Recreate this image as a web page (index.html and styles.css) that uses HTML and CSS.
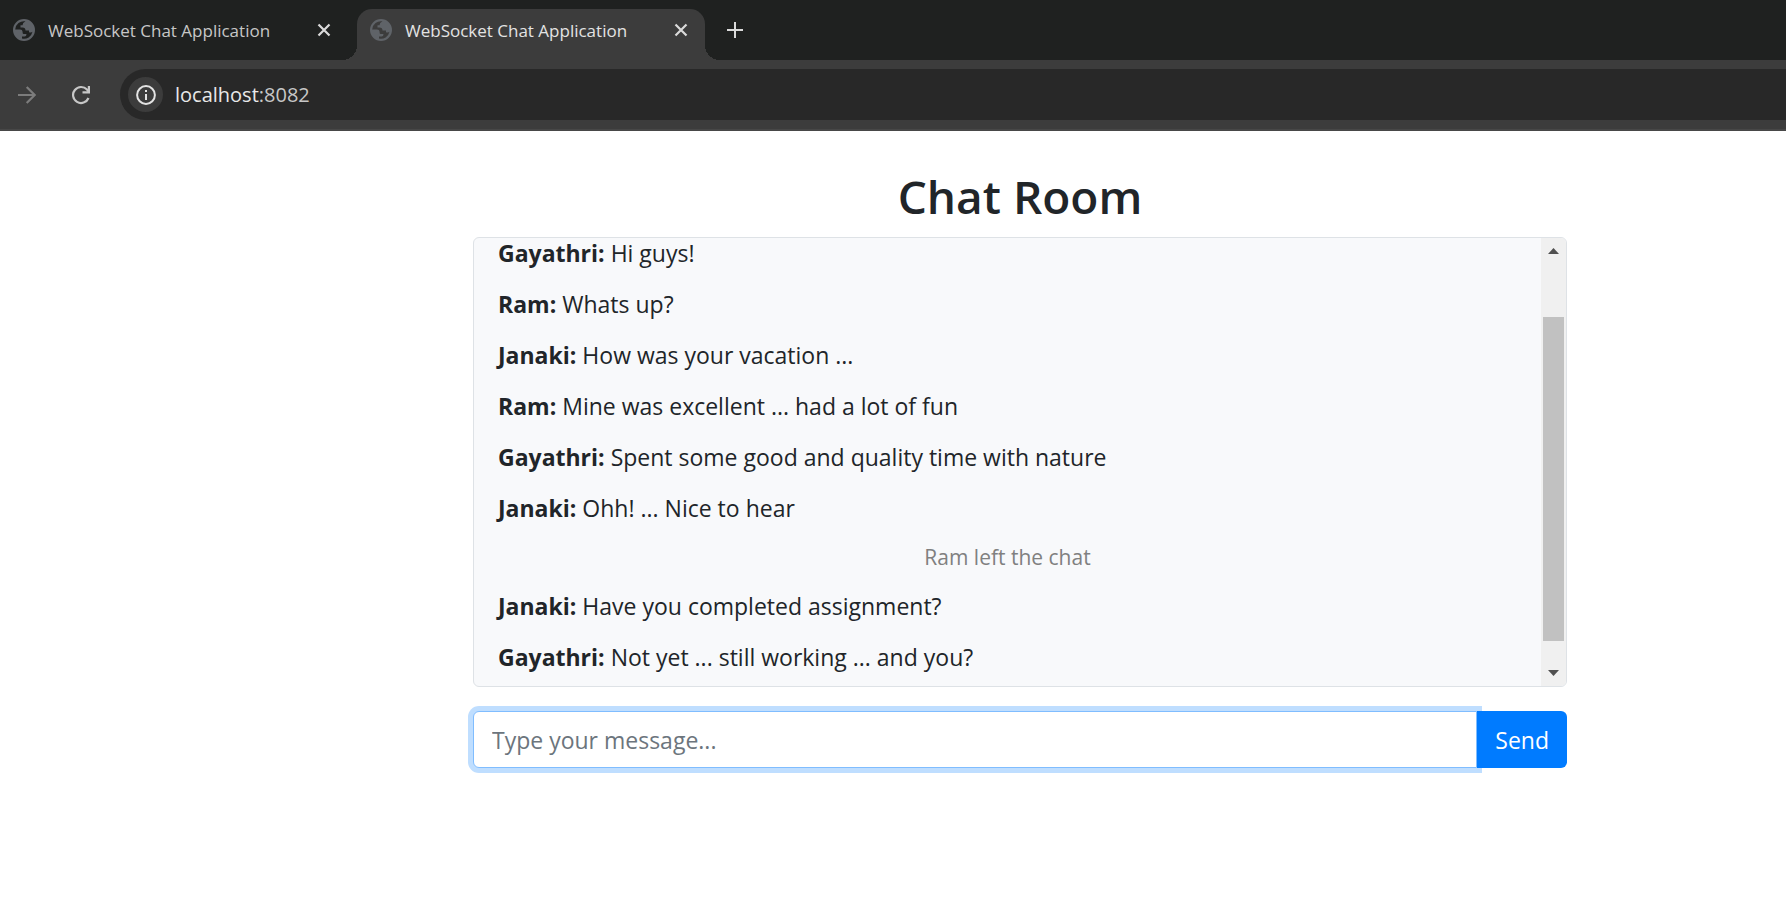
FILE: index.html
```html
<!DOCTYPE html>
<html lang="en">
<head>
<meta charset="utf-8">
<title>WebSocket Chat Application</title>
<link rel="stylesheet" href="styles.css">
</head>
<body>
<svg class="defs" aria-hidden="true">
  <symbol id="globe" viewBox="0 0 22 22">
    <path fill="#5f6368" fill-rule="evenodd" d="M11 0A11 11 0 1 1 11 22A11 11 0 1 1 11 0Z M2.200 10.500A8.800 8.800 0 0 1 12.500 2.300Q9.500 4 9.500 6.200H7.500V8.500H9.500Q12.500 8.500 12.500 11.500H16V13.200Q18 14.200 19.500 12.800A8.800 8.800 0 0 1 9 19.600V17.500H11.500Q13.500 17.500 13.500 15H10.500Q9.500 15 9.500 12.500Q9.500 10.500 7 10.500Z"/>
  </symbol>
  <symbol id="close" viewBox="0 0 14 14">
    <path d="M1.500 1.500 12.500 12.500 M12.500 1.500 1.500 12.500" fill="none" stroke="currentColor" stroke-width="2.200"/>
  </symbol>
</svg>
<header>
  <nav class="tabs" aria-label="Tabs">
    <div class="tab">
      <svg class="globe"><use href="#globe"/></svg>
      <span class="tab-title">WebSocket Chat Application</span>
      <button class="icon-button" aria-label="Close tab"><svg class="close"><use href="#close"/></svg></button>
    </div>
    <div class="tab active">
      <svg class="globe"><use href="#globe"/></svg>
      <span class="tab-title">WebSocket Chat Application</span>
      <button class="icon-button" aria-label="Close tab"><svg class="close"><use href="#close"/></svg></button>
    </div>
    <button class="icon-button new-tab" aria-label="New tab"><svg width="16" height="16" viewBox="0 0 16 16"><path d="M8 0V16M0 8H16" stroke="currentColor" stroke-width="2"/></svg></button>
  </nav>
  <div class="toolbar">
    <button class="icon-button forward" aria-label="Forward"><svg width="18" height="18" viewBox="0 0 18 18"><path d="M0 9H16.500M8.700 1 16.700 9 8.700 17" fill="none" stroke="currentColor" stroke-width="2.200"/></svg></button>
    <button class="icon-button reload" aria-label="Reload"><svg width="18" height="20" viewBox="0 0 18 20"><path d="M16.500 13A8 8 0 1 1 15 4.600L17 7" fill="none" stroke="currentColor" stroke-width="2.200"/><path d="M18 1V8.500H10.500V6.300H15.800V1Z" fill="currentColor"/></svg></button>
    <div class="address">
      <button class="icon-button info" aria-label="Site information"><svg width="20" height="20" viewBox="0 0 20 20"><circle cx="10" cy="10" r="8.900" fill="none" stroke="currentColor" stroke-width="2"/><path d="M9 9h2v6H9zM9 5h2v2H9z" fill="currentColor"/></svg></button>
      <span class="url">localhost<span class="port">:8082</span></span>
    </div>
  </div>
</header>
<main class="page">
  <h1 class="title">Chat Room</h1>
  <section class="chat" aria-label="Messages">
    <div class="messages">
      <p class="message"><strong>Gayathri:</strong> Hi guys!</p>
      <p class="message"><strong>Ram:</strong> Whats up?</p>
      <p class="message"><strong>Janaki:</strong> How was your vacation ...</p>
      <p class="message"><strong>Ram:</strong> Mine was excellent ... had a lot of fun</p>
      <p class="message"><strong>Gayathri:</strong> Spent some good and quality time with nature</p>
      <p class="message"><strong>Janaki:</strong> Ohh! ... Nice to hear</p>
      <p class="message notice">Ram left the chat</p>
      <p class="message"><strong>Janaki:</strong> Have you completed assignment?</p>
      <p class="message"><strong>Gayathri:</strong> Not yet ... still working ... and you?</p>
    </div>
    <div class="scrollbar" aria-hidden="true">
      <svg width="11" height="6" viewBox="0 0 11 6"><path d="M0 6 5.500 0 11 6Z" fill="#505050"/></svg>
      <div class="track"><div class="thumb"></div></div>
      <svg width="11" height="6" viewBox="0 0 11 6"><path d="M0 0 5.500 6 11 0Z" fill="#505050"/></svg>
    </div>
  </section>
  <form class="composer">
    <input class="field" type="text" placeholder="Type your message..." aria-label="Message">
    <button class="send" type="button">Send</button>
  </form>
</main>
</body>
</html>
```
FILE: styles.css
```css
* { box-sizing: border-box; }
body {
  margin: 0;
  background: #fff;
  color: #212529;
  font-family: "Segoe UI", "Open Sans", "Noto Sans", sans-serif;
  font-size: 23px;
  line-height: 36px;
}
.defs { display: none; }
.icon-button {
  display: flex;
  align-items: center;
  justify-content: center;
  padding: 0;
  border: 0;
  background: none;
  color: #dadada;
}
.tabs {
  display: flex;
  height: 60px;
  padding-top: 9px;
  background: #1f2120;
}
.tab {
  display: flex;
  align-items: center;
  width: 357px;
  padding: 0 26px 9px 13px;
  color: #c7c7c7;
  font-size: 17px;
  line-height: 24px;
}
.tab.active {
  position: relative;
  width: 348px;
  padding-right: 17px;
  border-radius: 15px 15px 0 0;
  background: #3c3c3c;
  color: #e3e3e3;
}
.tab.active::before,
.tab.active::after {
  content: "";
  position: absolute;
  bottom: 0;
  width: 15px;
  height: 15px;
}
.tab.active::before {
  right: 100%;
  background: radial-gradient(circle at 0 0, transparent 15px, #3c3c3c 15px);
}
.tab.active::after {
  left: 100%;
  background: radial-gradient(circle at 100% 0, transparent 15px, #3c3c3c 15px);
}
.globe { width: 22px; height: 22px; margin-right: 13px; }
.close { width: 14px; height: 14px; }
.tab-title { flex: 1; padding-top: 2px; white-space: nowrap; }
.new-tab { margin: 0 0 9px 22px; }
.toolbar {
  display: flex;
  align-items: center;
  height: 71px;
  padding: 9px 0 9px 18px;
  border-bottom: 2px solid #474747;
  background: #3c3c3c;
}
.forward { color: #7c7c7c; }
.reload { margin: 0 30px 0 36px; color: #c7c7c7; }
.address {
  display: flex;
  flex: 1;
  align-items: center;
  height: 51px;
  padding-left: 8px;
  border-radius: 26px 0 0 26px;
  background: #282828;
  font-size: 20px;
  line-height: 28px;
}
.info {
  width: 35px;
  height: 35px;
  margin-right: 12px;
  border-radius: 50%;
  background: #3c3c3c;
  color: #e3e3e3;
}
.url { color: #e8e8e8; }
.port { color: #c7c7c7; }
.page { padding: 36px 219px 48px 473px; }
.title {
  margin: 0 0 12px;
  font-size: 46px;
  font-weight: 600;
  line-height: 58px;
  text-align: center;
}
.chat {
  display: flex;
  height: 450px;
  margin-bottom: 24px;
  overflow: hidden;
  border: 1px solid #dee2e6;
  border-radius: 6px;
  background: #f8f9fb;
}
.messages {
  display: flex;
  flex: 1;
  flex-direction: column;
  justify-content: flex-end;
  gap: 15px;
  padding: 0 24px 11px;
}
.message { flex: none; margin: 0; }
.notice {
  color: #808080;
  font-size: 21px;
  line-height: 32px;
  text-align: center;
}
.scrollbar {
  display: flex;
  flex-direction: column;
  align-items: center;
  width: 25px;
  padding: 10px 2px;
  background: #f0f0f0;
}
.track {
  display: flex;
  flex: 1;
  width: 100%;
  padding: 63px 0 29px;
}
.thumb { flex: 1; background: #c1c1c1; }
.composer { display: flex; height: 57px; }
.field {
  flex: 1;
  min-width: 0;
  padding: 9px 18px;
  border: 1px solid #80bdff;
  border-radius: 6px 0 0 6px;
  outline: 0;
  box-shadow: 0 0 0 5px #bfdeff;
  color: #495057;
  font: inherit;
}
.field::placeholder { color: #6c757d; opacity: 1; }
.send {
  z-index: 1;
  padding: 9px 18px;
  border: 0;
  border-radius: 0 6px 6px 0;
  background: #007bff;
  color: #fff;
  font: inherit;
}
```
